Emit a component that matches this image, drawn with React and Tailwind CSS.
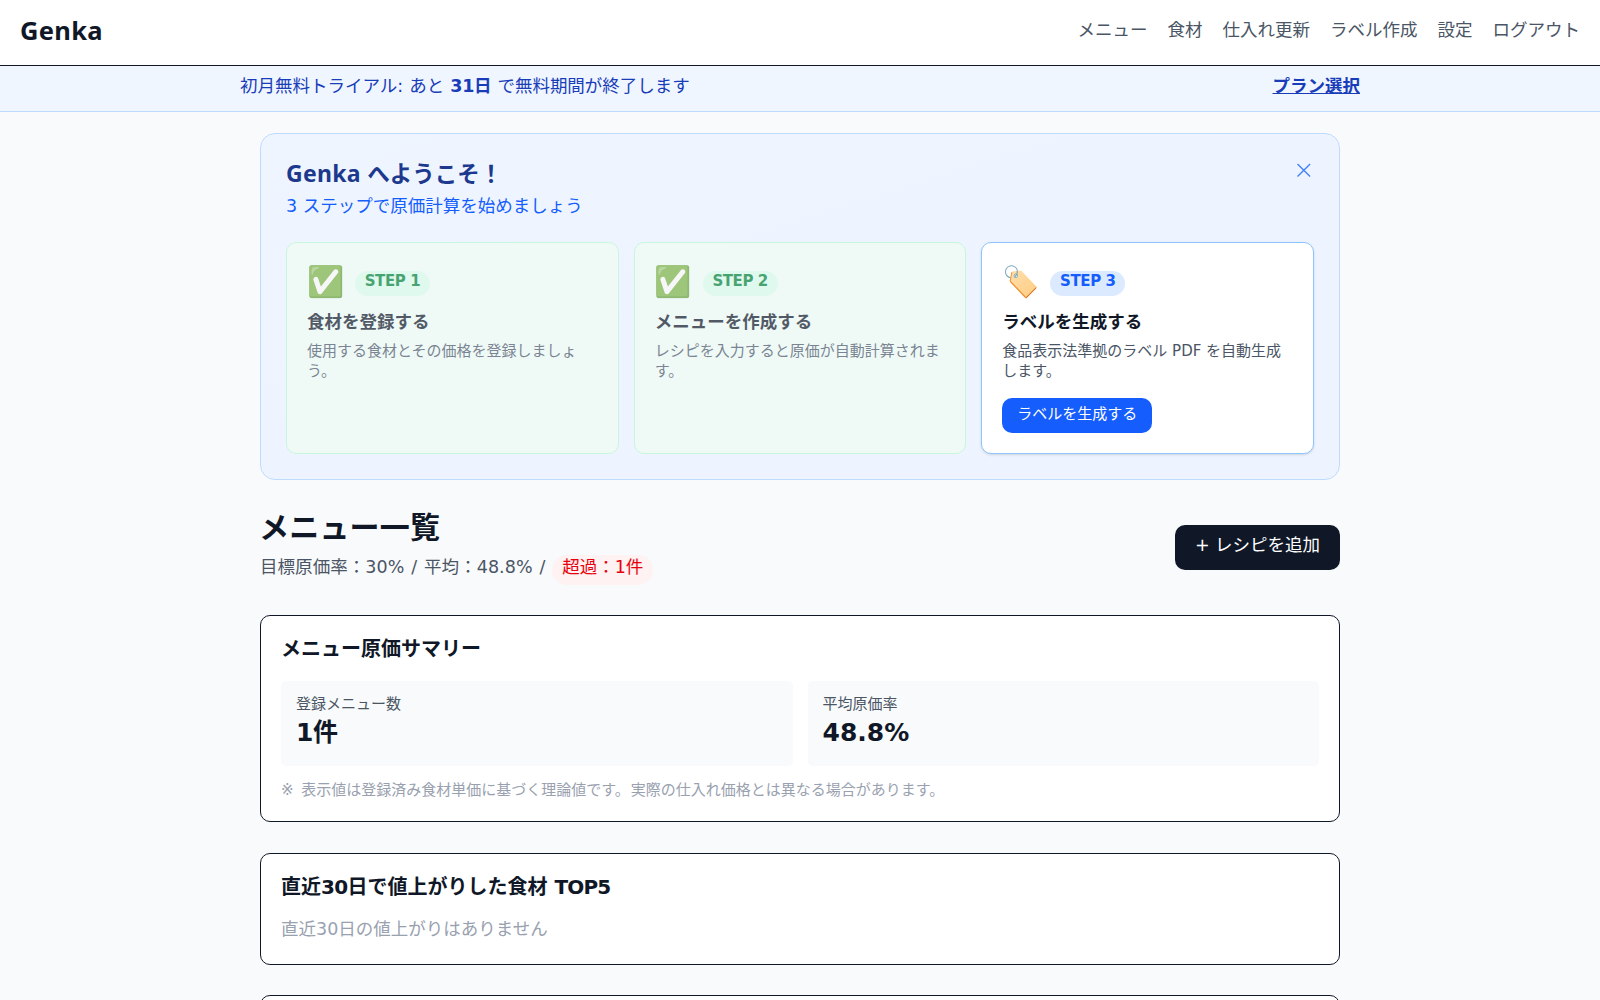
const NAV = ['メニュー', '食材', '仕入れ更新', 'ラベル作成', '設定', 'ログアウト'];

const STEPS = [
  { icon: '✅', step: 'STEP 1', title: '食材を登録する', text: '使用する食材とその価格を登録しましょう。', done: true },
  { icon: '✅', step: 'STEP 2', title: 'メニューを作成する', text: 'レシピを入力すると原価が自動計算されます。', done: true },
  { icon: '🏷️', step: 'STEP 3', title: 'ラベルを生成する', text: '食品表示法準拠のラベル PDF を自動生成します。', done: false },
];

function Up({ children, className = '' }) {
  return <span className={`inline-block -translate-y-[2px] ${className}`}>{children}</span>;
}

function Step({ icon, step, title, text, done }) {
  return (
    <div
      className={
        done
          ? 'rounded-[10px] border border-green-200 bg-green-50 p-5 opacity-70'
          : 'rounded-[10px] border border-blue-300 bg-white p-5 shadow-sm'
      }
    >
      <div className="mb-2.5 flex h-10 items-center gap-2.5">
        <span className="w-[38px] -translate-y-px whitespace-nowrap text-[30px] leading-10">{icon}</span>
        <span
          className={`flex h-[25px] w-[75px] items-center justify-center rounded-full text-[15px] font-bold leading-5 tracking-[-0.4px] ${
            done ? 'bg-green-100 text-green-700' : 'bg-blue-100 text-blue-600'
          }`}
        >
          <Up>{step}</Up>
        </span>
      </div>
      <h3 className="-mt-px text-[17.5px] font-bold leading-[25px] text-gray-900"><Up>{title}</Up></h3>
      <p className="mt-[6px] text-[15px] leading-5 text-gray-600"><Up>{text}</Up></p>
      {!done && (
        <button className="mt-[15px] block h-[35px] w-[150px] rounded-[10px] bg-blue-600 text-[15px] leading-5 text-white">
          <Up>ラベルを生成する</Up>
        </button>
      )}
    </div>
  );
}

function Stat({ label, children }) {
  return (
    <div className="h-[85px] rounded-[5px] bg-gray-50 p-[15px]">
      <p className="text-[15px] leading-5 text-gray-600"><Up>{label}</Up></p>
      <p className="mt-px text-[25px] font-bold leading-[35px]"><Up>{children}</Up></p>
    </div>
  );
}

export default function App() {
  return (
    <div className="h-[1000px] overflow-hidden bg-gray-50 font-['DejaVu_Sans','Noto_Sans_CJK_JP','Noto_Color_Emoji',sans-serif] text-[17.5px] leading-[25px] text-gray-900">
      <header className="flex h-[66px] items-center justify-between border-b border-gray-900 bg-white px-5">
        <span className="font-['Noto_Sans',sans-serif] text-[25.5px] font-bold leading-[35px] tracking-[0.3px]"><Up>Genka</Up></span>
        <nav className="flex gap-5 text-gray-600">
          {NAV.map((n) => <a key={n}><Up>{n}</Up></a>)}
        </nav>
      </header>
      <div className="h-[46px] border-b border-blue-200 bg-blue-50 py-2.5 text-blue-800">
        <div className="mx-auto flex w-[1120px] justify-between">
          <Up className="[word-spacing:0.5px]">初月無料トライアル: あと <b className="tracking-[-0.3px]">31日</b> で無料期間が終了します</Up>
          <Up><a className="font-bold underline">プラン選択</a></Up>
        </div>
      </div>

      <main className="mx-auto w-[1080px] pt-[21px]">
        <section className="mb-[29px] rounded-[15px] border border-blue-200 bg-linear-to-br from-[#eff5ff] to-[#edf3ff] p-[25px]">
          <div className="mb-5 flex items-start justify-between">
            <div>
              <h2 className="-mt-px text-[22.5px] font-bold leading-[35px] text-blue-900">
                <Up><span className="font-['Noto_Sans',sans-serif] text-[23px] tracking-[0.3px]">Genka </span>へようこそ！</Up>
              </h2>
              <p className="mb-px mt-[2px] text-blue-600"><Up>3 ステップで原価計算を始めましょう</Up></p>
            </div>
            <button aria-label="閉じる" className="mt-[1px] text-[#4382fb]">
              <svg width="20" height="20" viewBox="0 0 20 20" fill="none" stroke="currentColor" strokeWidth="1.4">
                <path d="M3.5 3.9 16.1 16.5M16.1 3.9 3.5 16.5" />
              </svg>
            </button>
          </div>
          <div className="grid h-[212px] grid-cols-3 gap-[15px]">
            {STEPS.map((s) => <Step key={s.step} {...s} />)}
          </div>
        </section>

        <div className="mb-[30px] flex h-[76px] items-center justify-between">
          <div>
            <h1 className="text-[30px] font-bold leading-10"><Up className="-translate-x-px tracking-[0.2px]">メニュー一覧</Up></h1>
            <p className="mt-[5px] flex h-[30px] items-center text-gray-600">
              <Up className="whitespace-pre tracking-[0.06px] [word-spacing:1.2px]">目標原価率：30% / 平均：48.8% / </Up>
              <span className="flex h-[30px] w-[101px] items-center justify-center rounded-full bg-red-50 text-red-600"><Up>超過：1件</Up></span>
            </p>
          </div>
          <button className="h-[45px] w-[165px] rounded-[10px] bg-gray-900 text-white"><Up>+ レシピを追加</Up></button>
        </div>

        <section className="mb-[31px] rounded-[10px] border border-gray-900 bg-white p-5">
          <h2 className="mb-[15px] text-xl font-bold leading-[30px]"><Up>メニュー原価サマリー</Up></h2>
          <div className="grid grid-cols-2 gap-[15px]">
            <Stat label="登録メニュー数"><span className="tracking-[-0.5px]">1</span>件</Stat>
            <Stat label="平均原価率">48.8%</Stat>
          </div>
          <p className="-mb-px mt-4 text-[15px] leading-5 text-gray-400">
            <Up className="[word-spacing:3px]">※ 表示値は登録済み食材単価に基づく理論値です。<span className="ml-px">実際の仕入れ価格とは異なる場合があります。</span></Up>
          </p>
        </section>

        <section className="mb-[30px] rounded-[10px] border border-gray-900 bg-white p-5">
          <h2 className="mb-[15px] text-xl font-bold leading-[30px]">
            <Up>直近<span className="tracking-[-0.7px]">30</span>日で値上がりした食材 <span className="tracking-[-0.8px]">TOP5</span></Up>
          </h2>
          <p className="text-gray-400"><Up>直近30日の値上がりはありません</Up></p>
        </section>

        <section className="h-[112px] rounded-[10px] border border-gray-900 bg-white" />
      </main>
    </div>
  );
}
